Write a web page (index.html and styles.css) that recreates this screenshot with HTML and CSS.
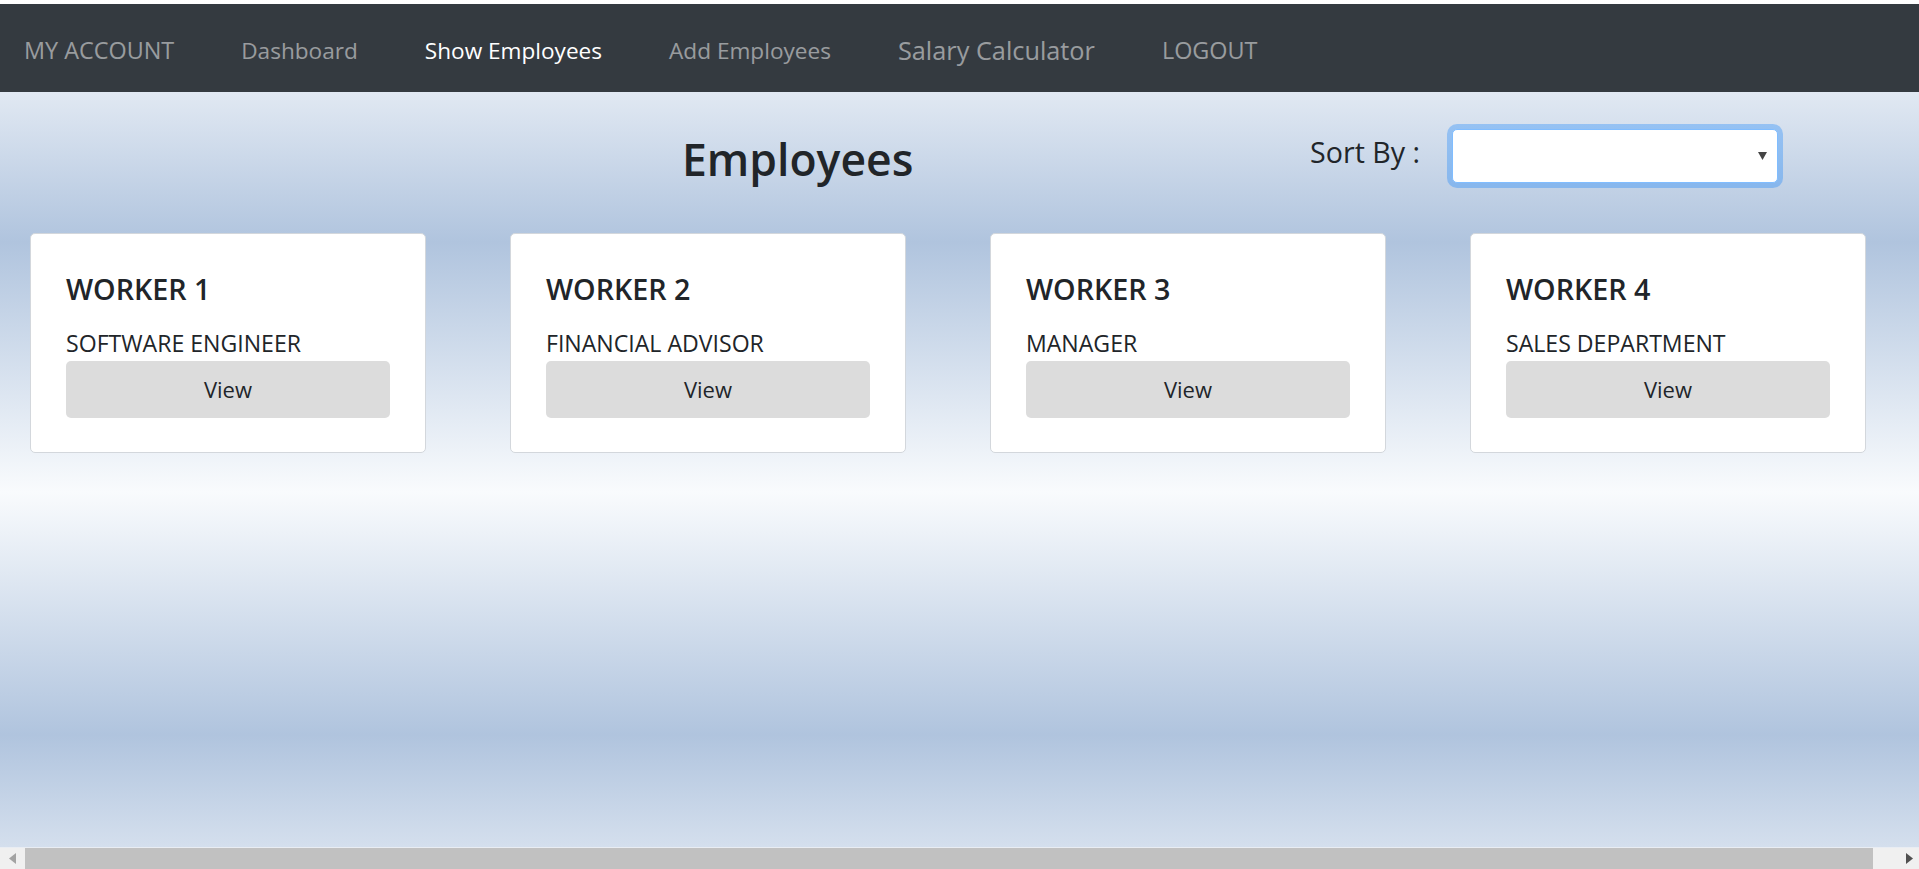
FILE: index.html
```html
<!DOCTYPE html>
<html lang="en">
<head>
<meta charset="utf-8">
<title>Employees</title>
<link rel="stylesheet" href="styles.css">
</head>
<body>
<div class="page">
  <nav class="navbar">
    <a class="nav-link nav-caps" href="#">MY ACCOUNT</a>
    <a class="nav-link" href="#">Dashboard</a>
    <a class="nav-link active" href="#">Show Employees</a>
    <a class="nav-link" href="#">Add Employees</a>
    <a class="nav-link nav-big" href="#">Salary Calculator</a>
    <a class="nav-link nav-caps" href="#">LOGOUT</a>
  </nav>

  <main class="main">
    <header class="header">
      <h1 class="title">Employees</h1>
      <div class="sort">
        <label class="sort-label">Sort By :</label>
        <div class="select">
          <svg class="select-arrow" width="9" height="8" viewBox="0 0 9 8"><path d="M0 0H9L4.5 8Z" fill="#444"/></svg>
        </div>
      </div>
    </header>

    <section class="cards">
      <div class="card">
        <h4 class="card-title">WORKER 1</h4>
        <p class="card-sub">SOFTWARE ENGINEER</p>
        <button class="btn">View</button>
      </div>
      <div class="card">
        <h4 class="card-title">WORKER 2</h4>
        <p class="card-sub">FINANCIAL ADVISOR</p>
        <button class="btn">View</button>
      </div>
      <div class="card">
        <h4 class="card-title">WORKER 3</h4>
        <p class="card-sub">MANAGER</p>
        <button class="btn">View</button>
      </div>
      <div class="card">
        <h4 class="card-title">WORKER 4</h4>
        <p class="card-sub">SALES DEPARTMENT</p>
        <button class="btn">View</button>
      </div>
    </section>
  </main>

  <div class="hscroll">
    <div class="hscroll-btn">
      <svg width="7" height="11" viewBox="0 0 7 11"><path d="M7 0V11L0 5.5Z" fill="#a3a3a3"/></svg>
    </div>
    <div class="hscroll-thumb"></div>
    <div class="hscroll-end">
      <svg width="7" height="11" viewBox="0 0 7 11"><path d="M0 0V11L7 5.5Z" fill="#505050"/></svg>
    </div>
  </div>
</div>
</body>
</html>
```

FILE: styles.css
```css
html, body {
  margin: 0;
  padding: 0;
  height: 100%;
  overflow: hidden;
}

body {
  font-family: "Open Sans", "Noto Sans", sans-serif;
  color: #212529;
  background: linear-gradient(to bottom,
    #ffffff 0px,
    #b0c4de 242px,
    #f9fbfd 492px,
    #b0c4de 735px,
    #ffffff 980px);
}

.page {
  display: flex;
  flex-direction: column;
  min-height: 100vh;
  padding-top: 4px;
  box-sizing: border-box;
}

.navbar {
  display: flex;
  align-items: center;
  gap: 67px;
  height: 88px;
  padding-left: 24px;
  padding-top: 5px;
  box-sizing: border-box;
  background: #343a40;
}

.nav-link {
  font-size: 22.6px;
  color: rgba(255, 255, 255, 0.5);
  text-decoration: none;
  line-height: 1.2;
}

.nav-link.nav-caps {
  font-size: 23.4px;
}

.nav-link.active {
  color: #ffffff;
}

.nav-link.nav-big {
  font-size: 25.3px;
}

.main {
  flex: 1;
}

.header {
  display: flex;
  align-items: center;
  height: 128px;
  padding-left: 682px;
  padding-right: 141px;
}

.title {
  margin: 0;
  font-size: 44.5px;
  font-weight: 600;
  line-height: 1.2;
  padding-top: 6px;
}

.sort {
  margin-left: auto;
  display: flex;
  align-items: center;
  gap: 32px;
}

.sort-label {
  font-size: 28.6px;
  line-height: 1.2;
  margin-top: -8px;
}

.select {
  width: 326px;
  height: 54px;
  box-sizing: border-box;
  background: #ffffff;
  border: 1px solid #80bdff;
  border-radius: 5px;
  box-shadow: 0 0 0 5px rgba(0, 123, 255, 0.3);
  display: flex;
  align-items: center;
  justify-content: flex-end;
  padding-right: 10px;
}

.select-arrow {
  display: block;
}

.cards {
  display: flex;
  gap: 84px;
  padding-left: 30px;
  margin-top: 13px;
}

.card {
  width: 396px;
  box-sizing: border-box;
  background: #ffffff;
  border: 1px solid #d3d7dc;
  border-radius: 5px;
  padding: 38px 35px 34px;
  display: flex;
  flex-direction: column;
}

.card-title {
  margin: 0 0 24px;
  font-size: 28.7px;
  font-weight: 600;
  line-height: 1.2;
}

.card-sub {
  margin: 0 0 3px;
  font-size: 23.1px;
  line-height: 1.2;
}

.btn {
  height: 57px;
  border: none;
  border-radius: 5px;
  background: #dcdcdc;
  font-family: inherit;
  font-size: 22px;
  color: #212529;
  padding-bottom: 2px;
  cursor: pointer;
}

.hscroll {
  display: flex;
  height: 22px;
  background: #f0f0f0;
  border-top: 1px solid #e9edf3;
  box-sizing: border-box;
}

.hscroll-btn {
  width: 25px;
  display: flex;
  align-items: center;
  justify-content: center;
}

.hscroll-thumb {
  flex: 1;
  background: #c1c1c1;
}

.hscroll-end {
  width: 46px;
  display: flex;
  align-items: center;
  justify-content: flex-end;
  padding-right: 6px;
  box-sizing: border-box;
}
```
